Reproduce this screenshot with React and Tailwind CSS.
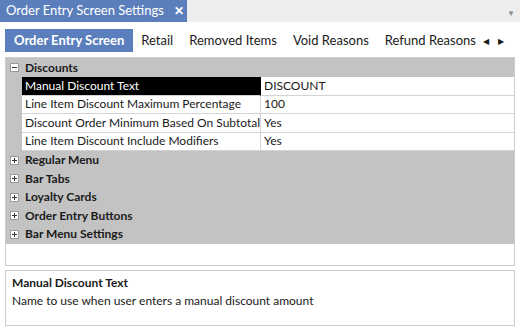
import React from 'react';

const font = { fontFamily: "'Segoe UI', Lato, 'Liberation Sans', sans-serif" };

function Box({ open }) {
  return (
    <span className="w-[9px] h-[9px] border border-[#9a9a9a] bg-white flex items-center justify-center shrink-0">
      <span className="relative w-[5px] h-[1px] bg-[#333]">
        {!open && <span className="absolute left-[2px] top-[-2px] w-[1px] h-[5px] bg-[#333]" />}
      </span>
    </span>
  );
}

const discountRows = [
  ['Manual Discount Text', 'DISCOUNT'],
  ['Line Item Discount Maximum Percentage', '100'],
  ['Discount Order Minimum Based On Subtotal Only', 'Yes'],
  ['Line Item Discount Include Modifiers', 'Yes'],
];

const groups = ['Regular Menu', 'Bar Tabs', 'Loyalty Cards', 'Order Entry Buttons', 'Bar Menu Settings'];

export default function App() {
  return (
    <div className="w-[520px] h-[331px] bg-white flex flex-col overflow-hidden text-[#1a1a1a] whitespace-nowrap" style={font}>
      {/* Document tab strip */}
      <div className="h-[22px] bg-[#eeeeee] flex items-stretch justify-between shrink-0">
        <div className="w-[187px] bg-[#5b7fbc] text-white text-[13px] flex items-center pl-[6px] gap-[10px]">
          <span>Order Entry Screen Settings</span>
          <span className="text-[12px] font-bold">✕</span>
        </div>
        <span className="text-[#8a8a8a] text-[8px] pr-[5px] pt-[7px]">▼</span>
      </div>

      <div className="flex-1 flex flex-col px-[5px] pt-[7px] pb-[5px]">
        {/* Tabs */}
        <div className="h-[23px] flex items-stretch text-[13px] shrink-0">
          <div className="bg-[#5b7fbc] text-white font-bold px-[9px] flex items-center">Order Entry Screen</div>
          <div className="flex items-center pl-[8px] gap-[16px]">
            <span>Retail</span>
            <span>Removed Items</span>
            <span>Void Reasons</span>
            <span>Refund Reasons</span>
          </div>
          <div className="flex items-center gap-[9px] ml-[7px] text-[8px]">
            <span>◀</span>
            <span>▶</span>
          </div>
        </div>

        {/* Property grid */}
        <div className="mt-[5px] h-[209px] border border-[#cccccc] bg-white flex flex-col shrink-0 text-[12px]">
          <div className="h-[19px] bg-[#c3c3c3] flex items-center gap-[6px] pl-[4px] font-bold">
            <Box open />
            <span>Discounts</span>
          </div>
          {discountRows.map(([name, value], i) => (
            <div key={name} className="h-[18.5px] bg-[#c3c3c3] flex">
              <div className="w-[16px] shrink-0" />
              <div className={`w-[238px] shrink-0 px-[3px] flex items-center overflow-hidden border-b border-[#d4d4d4] ${i === 0 ? 'bg-black text-white' : 'bg-white'}`}>
                {name}
              </div>
              <div className={`flex-1 bg-white px-[3px] flex items-center border-b border-[#d4d4d4] border-l ${i === 0 ? 'border-l-black' : 'border-l-[#d4d4d4]'}`}>
                {value}
              </div>
            </div>
          ))}
          {groups.map(g => (
            <div key={g} className="h-[18.5px] bg-[#c3c3c3] flex items-center gap-[6px] pl-[4px] font-bold">
              <Box />
              <span>{g}</span>
            </div>
          ))}
        </div>

        {/* Description */}
        <div className="mt-[4px] flex-1 border border-[#cccccc] px-[6px] pt-[3px] text-[12px]">
          <div className="font-bold">Manual Discount Text</div>
          <div>Name to use when user enters a manual discount amount</div>
        </div>
      </div>
    </div>
  );
}
